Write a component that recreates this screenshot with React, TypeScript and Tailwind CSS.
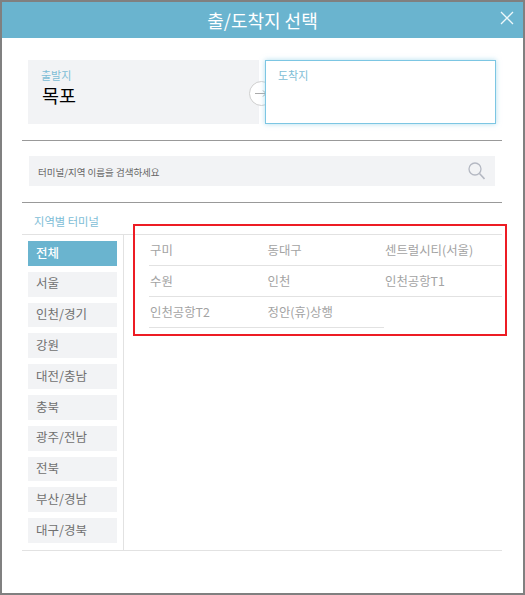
import React from "react";

const regions = [
  "전체",
  "서울",
  "인천/경기",
  "강원",
  "대전/충남",
  "충북",
  "광주/전남",
  "전북",
  "부산/경남",
  "대구/경북",
];

const terminals = [
  "구미",
  "동대구",
  "센트럴시티(서울)",
  "수원",
  "인천",
  "인천공항T1",
  "인천공항T2",
  "정안(휴)상행",
];

const App: React.FC = () => {
  return (
    <div className="w-[525px] h-[595px] border-2 border-[#808080] bg-white font-['Noto_Sans_CJK_KR','Noto_Sans',sans-serif] relative overflow-hidden">
      <div className="h-[36px] bg-[#6ab4cf] relative flex items-center justify-center text-white text-[18px]">
        출/도착지 선택
        <svg
          className="absolute right-[9px] top-[9px]"
          width="14"
          height="14"
          viewBox="0 0 14 14"
          fill="none"
          stroke="#eef8fb"
          strokeWidth="1.3"
        >
          <path d="M1 1 L13 13 M13 1 L1 13" />
        </svg>
      </div>

      <div className="flex ml-[26px] mt-[22px] h-[64px] w-[468px] relative">
        <div className="w-[231px] bg-[#f2f3f5] pl-[14px] pt-[7px]">
          <div className="-ml-px text-[11px] leading-[16px] text-[#7dbdd6]">출발지</div>
          <div className="text-[18.5px] leading-[24px] text-black">목포</div>
        </div>
        <div className="absolute left-[221px] top-[21px] w-[25px] h-[25px] rounded-full bg-white border border-[#cfcfcf]">
          <svg
            className="absolute left-[5px] top-[7px]"
            width="12"
            height="9"
            viewBox="0 0 12 9"
            fill="none"
            stroke="#aaaaaa"
            strokeWidth="1"
          >
            <path d="M0 4.5 H11 M8 1.5 L11 4.5 L8 7.5" />
          </svg>
        </div>
        <div className="relative ml-[6px] w-[231px] bg-white border border-[#7cc6e3] shadow-[0_0_5px_rgba(124,198,227,0.6)] pl-[12px] pt-[6px]">
          <div className="text-[11px] leading-[16px] text-[#7dbdd6]">도착지</div>
        </div>
      </div>

      <div className="ml-[20px] mt-[16px] w-[480px] h-px bg-[#999999]" />

      <div className="ml-[27px] mt-[15px] w-[466px] h-[30px] bg-[#f2f3f5] flex items-center justify-between pl-[9px] pr-[10px]">
        <span className="pt-[3px] text-[9.5px] text-[#666666]">터미널/지역 이름을 검색하세요</span>
        <svg width="17" height="18" viewBox="0 0 17 18" fill="none" stroke="#b4b8c2" strokeWidth="1.3">
          <circle cx="7" cy="7" r="6" />
          <path d="M11.5 11.5 L16.5 17" strokeWidth="1.6" />
        </svg>
      </div>

      <div className="ml-[20px] mt-[16px] w-[480px] h-px bg-[#999999]" />

      <div className="ml-[32px] mt-[10px] h-[21px] text-[11.3px] leading-[17px] text-[#7dbdd6]">
        지역별 터미널
      </div>

      <div className="ml-[20px] w-[480px] h-[317px] border-t border-b border-[#e2e2e2] flex">
        <div className="w-[102px] border-r border-[#e2e2e2] pl-[6px] pt-[6px] flex flex-col gap-[6px]">
          {regions.map((region, i) => (
            <div
              key={region}
              className={`w-[89px] h-[24.8px] pl-[8px] pb-[1px] flex items-center text-[12.5px] ${
                i === 0 ? "bg-[#6ab4cf] text-white font-medium" : "bg-[#f2f3f5] text-[#707070]"
              }`}
            >
              {region}
            </div>
          ))}
        </div>
        <div className="pl-[25px] grid grid-cols-[117.5px_117.5px_118px] auto-rows-[31px] content-start">
          {terminals.map((name) => (
            <div
              key={name}
              className="border-b border-[#e2e2e2] pl-px flex items-center text-[12.4px] text-[#a3a3a3]"
            >
              {name}
            </div>
          ))}
        </div>
      </div>

      <div className="absolute left-[131px] top-[222px] w-[374px] h-[112px] border-2 border-[#ed1c24]" />
    </div>
  );
};

export default App;
